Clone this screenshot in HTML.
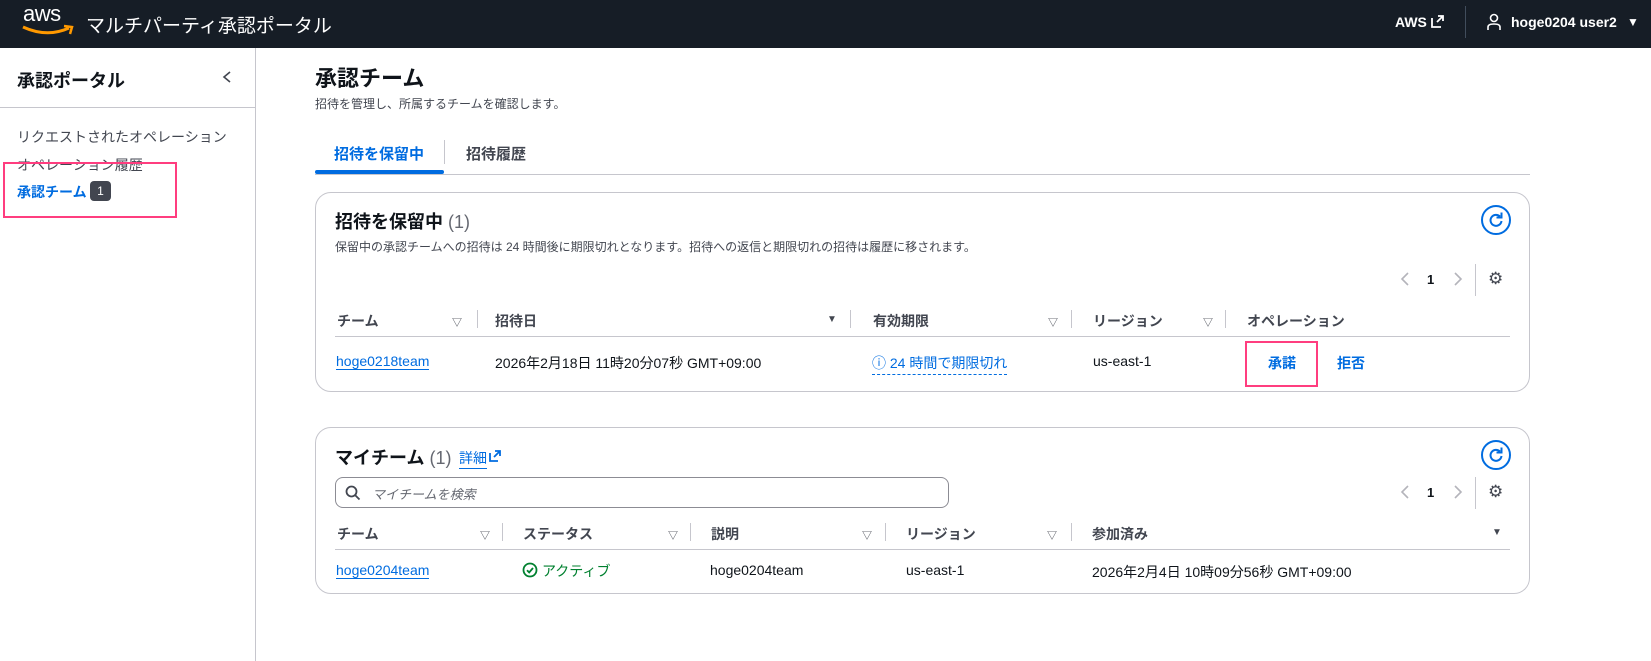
<!DOCTYPE html>
<html><head><meta charset="utf-8">
<style>
*{margin:0;padding:0;box-sizing:border-box}
body{width:1651px;height:661px;position:relative;overflow:hidden;background:#fff;font-family:"Liberation Sans","Noto Sans CJK JP",sans-serif;color:#0f141a;font-size:14px}
.a{position:absolute;white-space:nowrap}
.hdr{left:0;top:0;width:1651px;height:48px;background:#161d26}
.link{color:#006ce0}
.ul{border-bottom:1px solid #006ce0}
.th{font-weight:bold;color:#424650;font-size:14px}
.sort{font-size:10px;color:#424650}
.sep{width:1px;height:18px;background:#c6c6cd}
.card{border:1px solid #c6c6cd;border-radius:16px;left:315px;width:1215px}
.line{height:1px;background:#c6c6cd}
.pink{border:2px solid #ff3d7f}
.refresh{width:30px;height:30px;border:2px solid #006ce0;border-radius:50%}
</style></head><body>
<div class="a hdr"></div>
<div class="a" style="left:23px;top:3px;color:#fff;font-size:22px;letter-spacing:-0.5px;line-height:22px">aws</div>
<svg class="a" style="left:21px;top:24px" width="54" height="12"><path d="M2 3 Q26 14 48 4" stroke="#ff9900" stroke-width="3" fill="none"/><path d="M43 2 L51 3 L49 10" stroke="#ff9900" stroke-width="2.5" fill="none"/></svg>
<div class="a" style="left:86px;top:11px;color:#fff;font-size:19px">マルチパーティ承認ポータル</div>
<div class="a" style="left:1395px;top:14px;color:#fff;font-size:14px;font-weight:bold">AWS</div>
<svg class="a" style="left:1431px;top:15px" width="13" height="13"><path d="M1 3v9h9M6 7l6-6M7 1h5v5" stroke="#fff" stroke-width="1.8" fill="none"/></svg>
<div class="a" style="left:1465px;top:6px;width:1px;height:32px;background:#414d5c"></div>
<svg class="a" style="left:1486px;top:13px" width="16" height="18"><circle cx="8" cy="5" r="3.5" stroke="#fff" stroke-width="1.6" fill="none"/><path d="M2 17v-3q0-3 6-3t6 3v3" stroke="#fff" stroke-width="1.6" fill="none"/></svg>
<div class="a" style="left:1511px;top:14px;color:#fff;font-size:14px;font-weight:bold">hoge0204 user2</div>
<div class="a" style="left:1627px;top:15px;color:#fff;font-size:12px">▼</div>

<div class="a" style="left:255px;top:48px;width:1px;height:613px;background:#c6c6cd"></div>
<div class="a" style="left:17px;top:67px;font-size:18px;font-weight:bold">承認ポータル</div>
<svg class="a" style="left:221px;top:70px" width="12" height="14"><path d="M9 2L3 7l6 5" stroke="#424650" stroke-width="1.6" fill="none"/></svg>
<div class="a line" style="left:0;top:107px;width:255px"></div>
<div class="a" style="left:17px;top:127px;color:#424650">リクエストされたオペレーション</div>
<div class="a" style="left:17px;top:155px;color:#424650">オペレーション履歴</div>
<div class="a" style="left:17px;top:182px;color:#006ce0;font-weight:bold">承認チーム</div>
<div class="a" style="left:90px;top:181px;width:21px;height:20px;background:#424650;border-radius:4px;color:#fff;font-size:12px;text-align:center;line-height:20px">1</div>
<div class="a pink" style="left:3px;top:162px;width:174px;height:56px"></div>

<div class="a" style="left:315px;top:61px;font-size:22px;font-weight:bold">承認チーム</div>
<div class="a" style="left:315px;top:95px;font-size:12px;color:#424650">招待を管理し、所属するチームを確認します。</div>
<div class="a" style="left:334px;top:143px;color:#006ce0;font-weight:bold;font-size:15px">招待を保留中</div>
<div class="a" style="left:315px;top:170px;width:129px;height:4px;background:#006ce0;border-radius:2px"></div>
<div class="a" style="left:444px;top:140px;width:1px;height:24px;background:#c6c6cd"></div>
<div class="a" style="left:466px;top:143px;font-weight:bold;font-size:15px;color:#424650">招待履歴</div>
<div class="a line" style="left:315px;top:174px;width:1215px"></div>

<div class="a card" style="top:192px;height:200px"></div>
<div class="a" style="left:335px;top:208px;font-size:18px;font-weight:bold">招待を保留中 <span style="font-weight:normal;color:#656871">(1)</span></div>
<div class="a" style="left:335px;top:238px;font-size:12px;color:#424650">保留中の承認チームへの招待は 24 時間後に期限切れとなります。招待への返信と期限切れの招待は履歴に移されます。</div>
<div class="a refresh" style="left:1481px;top:205px"></div>
<svg class="a" style="left:1486px;top:210px" width="20" height="20"><path d="M14 6.5A5.5 5.5 0 1 0 15.5 11" stroke="#006ce0" stroke-width="2" fill="none"/><path d="M10.5 5.5h5v-5" stroke="#006ce0" stroke-width="2" fill="none" transform="translate(0,2)"/></svg>
<svg class="a" style="left:1400px;top:272px" width="10" height="14"><path d="M8 1L2 7l6 6" stroke="#b4b4bb" stroke-width="1.6" fill="none"/></svg>
<div class="a" style="left:1427px;top:272px;font-size:13px;font-weight:bold">1</div>
<svg class="a" style="left:1453px;top:272px" width="10" height="14"><path d="M2 1l6 6-6 6" stroke="#b4b4bb" stroke-width="1.6" fill="none"/></svg>
<div class="a" style="left:1475px;top:264px;width:1px;height:32px;background:#c6c6cd"></div>
<div class="a" style="left:1488px;top:269px;font-size:17px;color:#424650">⚙</div>
<div class="a th" style="left:337px;top:311px">チーム</div><div class="a sort" style="left:452px;top:314px">▽</div><div class="a sep" style="left:477px;top:310px"></div>
<div class="a th" style="left:495px;top:311px">招待日</div><div class="a sort" style="left:827px;top:314px">▼</div><div class="a sep" style="left:850px;top:310px"></div>
<div class="a th" style="left:873px;top:311px">有効期限</div><div class="a sort" style="left:1048px;top:314px">▽</div><div class="a sep" style="left:1071px;top:310px"></div>
<div class="a th" style="left:1093px;top:311px">リージョン</div><div class="a sort" style="left:1203px;top:314px">▽</div><div class="a sep" style="left:1225px;top:310px"></div>
<div class="a th" style="left:1247px;top:311px">オペレーション</div>
<div class="a line" style="left:335px;top:336px;width:1175px"></div>
<div class="a link ul" style="left:336px;top:353px">hoge0218team</div>
<div class="a" style="left:495px;top:353px">2026年2月18日 11時20分07秒 GMT+09:00</div>
<div class="a link" style="left:872px;top:353px;border-bottom:1px dashed #006ce0;padding-bottom:1px">ⓘ 24 時間で期限切れ</div>
<div class="a" style="left:1093px;top:353px">us-east-1</div>
<div class="a link" style="left:1268px;top:353px;font-weight:bold">承諾</div>
<div class="a link" style="left:1337px;top:353px;font-weight:bold">拒否</div>
<div class="a pink" style="left:1245px;top:341px;width:73px;height:46px"></div>

<div class="a card" style="top:427px;height:167px"></div>
<div class="a" style="left:335px;top:444px;font-size:18px;font-weight:bold">マイチーム <span style="font-weight:normal;color:#656871">(1)</span></div>
<div class="a link ul" style="left:459px;top:448px">詳細</div>
<svg class="a" style="left:489px;top:450px" width="12" height="12"><path d="M1 3v8h8M5 7l6-6M6 1h5v5" stroke="#006ce0" stroke-width="1.8" fill="none"/></svg>
<div class="a refresh" style="left:1481px;top:440px"></div>
<svg class="a" style="left:1486px;top:445px" width="20" height="20"><path d="M14 6.5A5.5 5.5 0 1 0 15.5 11" stroke="#006ce0" stroke-width="2" fill="none"/><path d="M10.5 5.5h5v-5" stroke="#006ce0" stroke-width="2" fill="none" transform="translate(0,2)"/></svg>
<div class="a" style="left:335px;top:477px;width:614px;height:31px;border:1px solid #8c8c94;border-radius:8px"></div>
<svg class="a" style="left:345px;top:485px" width="16" height="16"><circle cx="6.5" cy="6.5" r="5" stroke="#424650" stroke-width="1.8" fill="none"/><path d="M10 10l4.5 4.5" stroke="#424650" stroke-width="1.8"/></svg>
<div class="a" style="left:372px;top:484px;font-size:13px;color:#656871;font-style:italic">マイチームを検索</div>
<svg class="a" style="left:1400px;top:485px" width="10" height="14"><path d="M8 1L2 7l6 6" stroke="#b4b4bb" stroke-width="1.6" fill="none"/></svg>
<div class="a" style="left:1427px;top:485px;font-size:13px;font-weight:bold">1</div>
<svg class="a" style="left:1453px;top:485px" width="10" height="14"><path d="M2 1l6 6-6 6" stroke="#b4b4bb" stroke-width="1.6" fill="none"/></svg>
<div class="a" style="left:1475px;top:477px;width:1px;height:32px;background:#c6c6cd"></div>
<div class="a" style="left:1488px;top:482px;font-size:17px;color:#424650">⚙</div>
<div class="a th" style="left:337px;top:524px">チーム</div><div class="a sort" style="left:480px;top:527px">▽</div><div class="a sep" style="left:502px;top:523px"></div>
<div class="a th" style="left:523px;top:524px">ステータス</div><div class="a sort" style="left:668px;top:527px">▽</div><div class="a sep" style="left:690px;top:523px"></div>
<div class="a th" style="left:711px;top:524px">説明</div><div class="a sort" style="left:862px;top:527px">▽</div><div class="a sep" style="left:885px;top:523px"></div>
<div class="a th" style="left:906px;top:524px">リージョン</div><div class="a sort" style="left:1047px;top:527px">▽</div><div class="a sep" style="left:1071px;top:523px"></div>
<div class="a th" style="left:1092px;top:524px">参加済み</div><div class="a sort" style="left:1492px;top:527px">▼</div>
<div class="a line" style="left:335px;top:549px;width:1175px"></div>
<div class="a link ul" style="left:336px;top:562px">hoge0204team</div>
<svg class="a" style="left:522px;top:562px" width="16" height="16"><circle cx="8" cy="8" r="6.5" stroke="#00802f" stroke-width="1.8" fill="none"/><path d="M5 8.2l2.2 2.2L11 6" stroke="#00802f" stroke-width="1.8" fill="none"/></svg>
<div class="a" style="left:542px;top:561px;color:#00802f">アクティブ</div>
<div class="a" style="left:710px;top:562px">hoge0204team</div>
<div class="a" style="left:906px;top:562px">us-east-1</div>
<div class="a" style="left:1092px;top:562px">2026年2月4日 10時09分56秒 GMT+09:00</div>
</body></html>
